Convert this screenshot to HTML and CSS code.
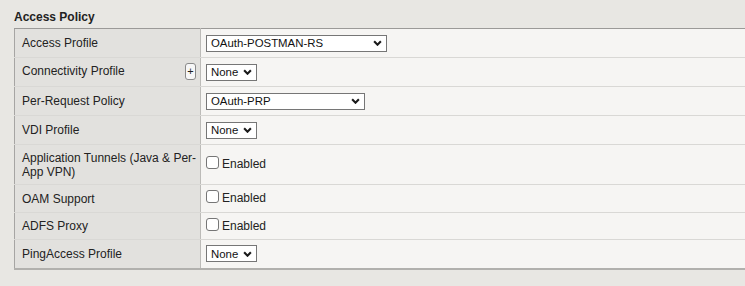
FILE: index.html
```html
<!DOCTYPE html>
<html lang="en">
<head>
    <meta charset="utf-8">
    <title>Access Policy</title>
    <link rel="stylesheet" href="styles.css">
</head>
<body>
    <h2 class="section-title">Access Policy</h2>

    <table class="props">
        <tr>
            <td class="label">Access Profile</td>
            <td class="value">
                <span class="select w-wide">OAuth-POSTMAN-RS<svg class="chev" viewBox="0 0 8 5"><path d="M1 1l3 3 3-3"/></svg></span>
            </td>
        </tr>
        <tr>
            <td class="label">
                <div class="label-row">Connectivity Profile <span class="plus">+</span></div>
            </td>
            <td class="value">
                <span class="select">None<svg class="chev" viewBox="0 0 8 5"><path d="M1 1l3 3 3-3"/></svg></span>
            </td>
        </tr>
        <tr>
            <td class="label">Per-Request Policy</td>
            <td class="value">
                <span class="select w-mid">OAuth-PRP<svg class="chev" viewBox="0 0 8 5"><path d="M1 1l3 3 3-3"/></svg></span>
            </td>
        </tr>
        <tr>
            <td class="label">VDI Profile</td>
            <td class="value">
                <span class="select">None<svg class="chev" viewBox="0 0 8 5"><path d="M1 1l3 3 3-3"/></svg></span>
            </td>
        </tr>
        <tr class="tall">
            <td class="label">Application Tunnels (Java &amp; Per-App VPN)</td>
            <td class="value"><label class="check"><span class="box"></span>Enabled</label></td>
        </tr>
        <tr class="short">
            <td class="label">OAM Support</td>
            <td class="value"><label class="check"><span class="box"></span>Enabled</label></td>
        </tr>
        <tr class="shorter">
            <td class="label">ADFS Proxy</td>
            <td class="value"><label class="check"><span class="box"></span>Enabled</label></td>
        </tr>
        <tr class="last">
            <td class="label">PingAccess Profile</td>
            <td class="value">
                <span class="select">None<svg class="chev" viewBox="0 0 8 5"><path d="M1 1l3 3 3-3"/></svg></span>
            </td>
        </tr>
    </table>
</body>
</html>
```

FILE: styles.css
```css
/* Geral */
* {
    box-sizing: border-box;
}

body {
    margin: 0;
    background-color: #e8e7e3;
    color: #222;
    font-family: "Liberation Sans", Arial, sans-serif;
    font-size: 12px;
    overflow: hidden;
}

.section-title {
    margin: 0;
    padding: 10px 14px 0;
    font-size: 12px;
    font-weight: bold;
    line-height: 14px;
    height: 28px;
}

/* Tabela de propriedades */
.props {
    border-collapse: collapse;
    margin-left: 14px;
    width: 760px;
    border-top: 1px solid #9b9a98;
    border-left: 1px solid #a6a5a3;
    border-bottom: 2px solid #b1b0ad;
}

.props td {
    height: 29px;
    padding: 0;
    border-bottom: 1px solid #d9d8d5;
    vertical-align: middle;
    line-height: 14px;
}

.props tr.tall td {
    height: 40px;
}

.props tr.short td {
    height: 28px;
}

.props tr.shorter td {
    height: 27px;
}

.props tr.last td {
    height: 29px;
    border-bottom: none;
}

.label {
    width: 186px;
    background-color: #e2e1de;
    border-right: 1px solid #bcbbb8;
    padding: 0 0 0 7px !important;
    color: #222;
}

.label-row {
    display: flex;
    align-items: center;
    justify-content: space-between;
    margin-top: -3px;
}

.label-row .plus {
    margin-top: 2px;
}

.plus {
    display: inline-flex;
    align-items: center;
    justify-content: center;
    width: 11px;
    height: 17px;
    margin-right: 4px;
    border: 1px solid #8a8a8a;
    border-radius: 3px;
    background-color: #f7f7f7;
    font-size: 11px;
    line-height: 1;
}

.value {
    background-color: #f6f5f3;
    padding-left: 5px !important;
}

/* Selects */
.select {
    display: inline-flex;
    align-items: center;
    justify-content: space-between;
    gap: 5px;
    height: 17px;
    padding: 0 4px 0 4px;
    border: 1px solid #767676;
    background-color: #fff;
    color: #111;
    font-size: 11.4px;
    vertical-align: middle;
}

.w-wide {
    width: 181px;
}

.w-mid {
    width: 159px;
}

.chev {
    width: 9px;
    height: 6px;
    fill: none;
    stroke: #1a1a1a;
    stroke-width: 1.9;
}

/* Checkbox */
.check {
    display: inline-flex;
    align-items: center;
    gap: 3px;
    font-size: 12px;
}

.box {
    display: inline-block;
    width: 13px;
    height: 13px;
    border: 1px solid #767676;
    border-radius: 3px;
    background-color: #fff;
    margin-top: -3px;
}
```
